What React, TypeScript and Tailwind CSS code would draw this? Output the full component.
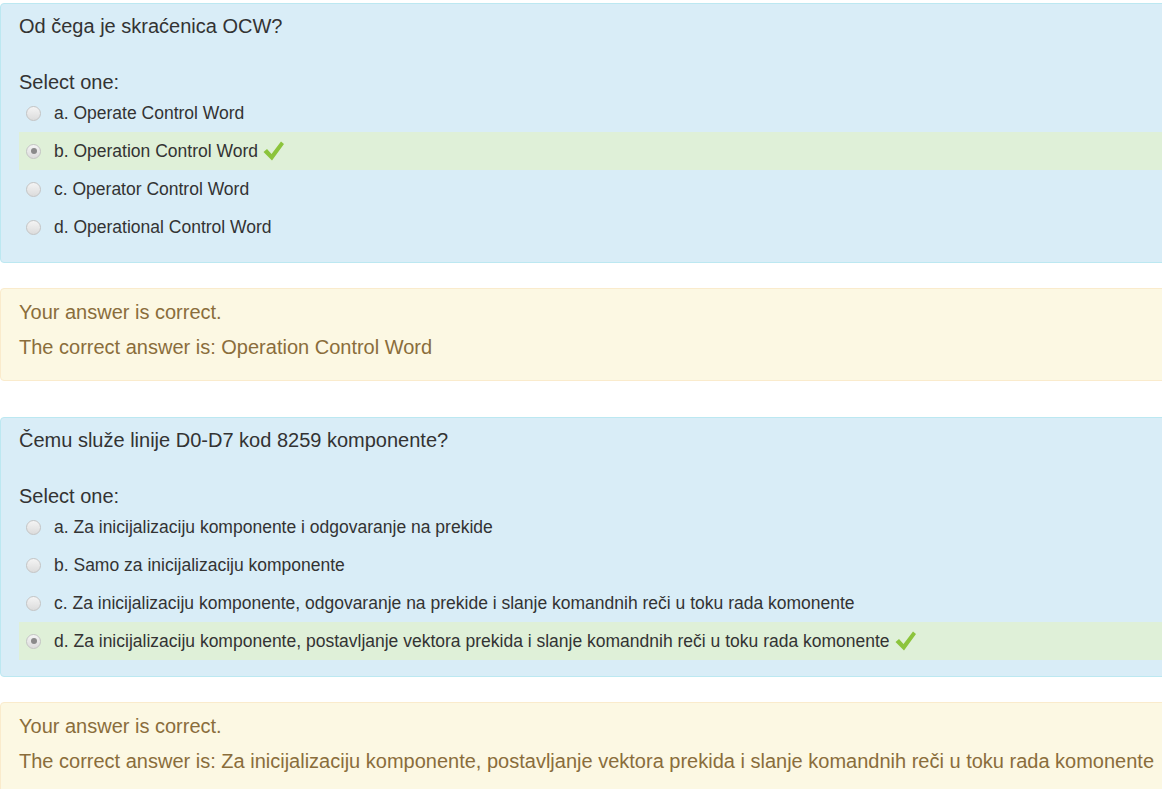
import React from 'react';

interface Question {
  text: string;
  options: string[];
  correct: number;
  answer: string;
}

const QUESTIONS: Question[] = [
  {
    text: 'Od čega je skraćenica OCW?',
    options: ['a. Operate Control Word', 'b. Operation Control Word', 'c. Operator Control Word', 'd. Operational Control Word'],
    correct: 1,
    answer: 'Operation Control Word'
  },
  {
    text: 'Čemu služe linije D0-D7 kod 8259 komponente?',
    options: [
      'a. Za inicijalizaciju komponente i odgovaranje na prekide',
      'b. Samo za inicijalizaciju komponente',
      'c. Za inicijalizaciju komponente, odgovaranje na prekide i slanje komandnih reči u toku rada komonente',
      'd. Za inicijalizaciju komponente, postavljanje vektora prekida i slanje komandnih reči u toku rada komonente'
    ],
    correct: 3,
    answer: 'Za inicijalizaciju komponente, postavljanje vektora prekida i slanje komandnih reči u toku rada komonente'
  }
];

const Radio = ({ checked }: { checked: boolean }) => (
  <span className="w-[15px] h-[15px] rounded-full border border-[#c4c4c4] bg-gradient-to-b from-[#f4f4f4] to-[#dcdcdc] flex items-center justify-center shrink-0">
    {checked && <span className="w-[6px] h-[6px] rounded-full bg-[#8a8a8a]" />}
  </span>
);

const Check = () => (
  <svg className="w-[21px] h-[20px] ml-[5px] shrink-0" viewBox="0 0 21 20">
    <path d="M0.5 11 L4 8 L8.5 13 L18 0.5 L21 3 L9 19.5 Z" fill="#8cc43c" />
  </svg>
);

export default function App() {
  return (
    <div className="w-[1162px] h-[789px] overflow-hidden bg-white" style={{ fontFamily: '"Liberation Sans", Arial, sans-serif' }}>
      <div className="w-[1180px] pt-[3px]">
        {QUESTIONS.map((q, qi) => (
          <div key={qi} className={qi > 0 ? 'mt-[36px]' : ''}>
            <div className="border border-[#bce8f1] bg-[#d9edf7] rounded-[4px] pt-[8px] pb-[16px] text-[#333333]">
              <div className="px-[18px] text-[20px] leading-[28px]">{q.text}</div>
              <div className="px-[18px] mt-[30px] text-[20px] leading-[24px]">Select one:</div>
              <div className="ml-[18px]">
                {q.options.map((opt, i) => (
                  <div key={i} className={`h-[38px] flex items-center pl-[7px] ${i === q.correct ? 'bg-[#dff0d8]' : ''}`}>
                    <Radio checked={i === q.correct} />
                    <span className="ml-[13px] text-[17.5px] leading-[24px] whitespace-nowrap">{opt}</span>
                    {i === q.correct && <Check />}
                  </div>
                ))}
              </div>
            </div>
            <div className="mt-[25px] border border-[#faebcc] bg-[#fcf8e3] rounded-[4px] pt-[9px] pb-[19px] px-[18px] text-[#8a6d3b] text-[20px] leading-[28px] whitespace-nowrap">
              <div>Your answer is correct.</div>
              <div className="mt-[7px]">The correct answer is: {q.answer}</div>
            </div>
          </div>
        ))}
      </div>
    </div>
  );
}
